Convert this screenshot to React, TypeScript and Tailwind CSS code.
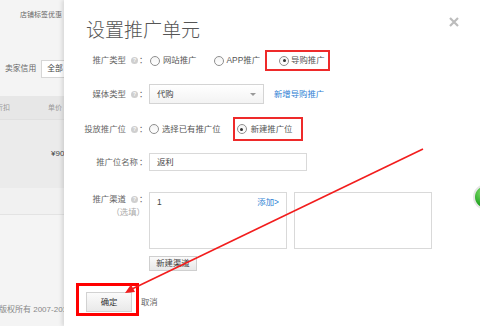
import React from "react";

function Radio({ checked = false }: { checked?: boolean }) {
  return (
    <span className="flex h-[10px] w-[10px] shrink-0 items-center justify-center rounded-full border border-[#8f8f8f] bg-gradient-to-b from-[#f4f4f4] to-white">
      {checked && <span className="h-[3px] w-[3px] rounded-full bg-[#333]" />}
    </span>
  );
}

function Help() {
  return (
    <span className="ml-[5px] flex h-[7px] w-[7px] items-center justify-center rounded-full bg-[#cfcfcf] text-[5px] font-bold leading-none text-white">
      ?
    </span>
  );
}

function Label({ text, help = true }: { text: string; help?: boolean }) {
  return (
    <div className="flex w-[83px] shrink-0 items-center justify-end text-[#666]">
      <span>{text}</span>
      {help && <Help />}
      <span className="ml-[1px] w-[8px]">：</span>
    </div>
  );
}

export default function App() {
  return (
    <div className="relative flex h-[326px] w-[480px] overflow-hidden bg-white font-['Liberation_Sans','Noto_Sans_CJK_SC',sans-serif] text-[8.4px] leading-none">
      {/* page behind the dialog */}
      <div className="flex w-[64px] shrink-0 flex-col overflow-hidden bg-[#f4f4f4] text-[#666]">
        <div className="flex h-[28px] items-center whitespace-nowrap pl-[20px] text-[7px]">
          店铺标签优惠
        </div>
        <div className="mt-[32px] flex h-[18px] items-center whitespace-nowrap pl-[5px] text-[7.8px]">
          <span>卖家信用</span>
          <span className="ml-[5px] flex h-[18px] w-[30px] shrink-0 items-center border border-[#d6d6d6] bg-white pl-[5px] text-[#444]">
            全部
          </span>
        </div>
        <div className="mt-[18px] flex h-[23px] items-center whitespace-nowrap bg-[#e7e7e7] text-[7px] text-[#999]">
          <span className="ml-[-4px]">折扣</span>
          <span className="ml-[38px]">单价</span>
        </div>
        <div className="flex h-[69px] items-center whitespace-nowrap border-t border-[#e0e0e0] bg-[#ebebeb] pl-[51px] text-[8px] text-[#444]">
          ¥90
        </div>
        <div className="h-[27px] border-b border-[#e3e3e3] bg-[#f1f1f1]" />
        <div className="flex flex-1 items-end whitespace-nowrap pb-[12px] text-[8px] text-[#888]">
          <span className="ml-[-1px]">版权所有 2007-2015</span>
        </div>
      </div>

      {/* dialog */}
      <div className="relative flex flex-1 flex-col bg-white text-[#555] shadow-[-2px_0_4px_rgba(0,0,0,0.12)]">
        <svg
          className="absolute right-[21px] top-[17px]"
          width="10"
          height="10"
          viewBox="0 0 10 10"
        >
          <path d="M1 1L9 9M9 1L1 9" stroke="#bcbcbc" strokeWidth="2.2" />
        </svg>

        <div className="mt-[16px] flex h-[24px] items-center pl-[22px] font-['Noto_Sans_CJK_SC',serif] text-[19px] font-light text-[#555]">
          设置推广单元
        </div>

        <div className="mt-[10px] flex h-[21px] items-center">
          <Label text="推广类型" />
          <div className="ml-[2px] flex items-center">
            <span className="ml-[1px]">
              <Radio />
            </span>
            <span className="ml-[3px]">网站推广</span>
            <span className="ml-[17px]">
              <Radio />
            </span>
            <span className="ml-[3px]">APP推广</span>
            <div className="ml-[5px] flex h-[21px] items-center border-2 border-[#ee2a2a] pl-[12px] pr-[3px]">
              <Radio checked />
              <span className="ml-[2px]">导购推广</span>
            </div>
          </div>
        </div>

        <div className="mt-[13px] flex h-[20px] items-center">
          <Label text="媒体类型" />
          <div className="ml-[2px] flex items-center">
            <div className="flex h-[20px] w-[115px] items-center justify-between border border-[#d4d4d4] bg-gradient-to-b from-white to-[#f3f3f3] pl-[7px] pr-[7px] text-[#444]">
              <span>代购</span>
              <span className="h-0 w-0 border-x-[3px] border-t-[3px] border-x-transparent border-t-[#999]" />
            </div>
            <span className="ml-[10px] text-[#2f7fd4]">新增导购推广</span>
          </div>
        </div>

        <div className="mt-[13px] flex h-[24px] items-center">
          <Label text="投放推广位" />
          <div className="ml-[2px] flex items-center">
            <Radio />
            <span className="ml-[3px]">选择已有推广位</span>
            <div className="ml-[12px] flex h-[24px] items-center border-2 border-[#ee2a2a] pl-[2px] pr-[8px]">
              <Radio checked />
              <span className="ml-[4px]">新建推广位</span>
            </div>
          </div>
        </div>

        <div className="mt-[12px] flex h-[18px] items-center">
          <Label text="推广位名称" help={false} />
          <div className="ml-[2px] flex h-[18px] w-[158px] items-center border border-[#d9d9d9] pl-[7px] text-[#444]">
            返利
          </div>
        </div>

        <div className="mt-[21px] flex">
          <div className="flex w-[83px] shrink-0 flex-col items-end">
            <div className="flex h-[14px] items-center">
              <span className="text-[#666]">推广渠道</span>
              <Help />
              <span className="ml-[1px] w-[8px] text-[#666]">：</span>
            </div>
            <div className="flex h-[12px] items-center pr-[2px] text-[#aaa]">（选填）</div>
          </div>
          <div className="ml-[2px] flex gap-[7px]">
            <div className="flex h-[57px] w-[138px] items-start justify-between border border-[#d9d9d9] px-[7px] pt-[5px]">
              <span className="text-[#444]">1</span>
              <span className="text-[#2f7fd4]">添加&gt;</span>
            </div>
            <div className="h-[57px] w-[138px] border border-[#d9d9d9]" />
          </div>
        </div>

        <div className="ml-[85px] mt-[7px] flex h-[15px] w-[48px] items-center justify-center border border-[#cfcfcf] bg-gradient-to-b from-[#fafafa] to-[#e8e8e8] text-[#444]">
          新建渠道
        </div>

        <div className="ml-[12px] mt-[12px] flex items-end">
          <div className="border-[3px] border-[#f00] pb-[1px] pl-[7px] pr-[4px] pt-[6px]">
            <div className="flex h-[20px] w-[46px] items-center justify-center border border-[#d2d2d2] bg-gradient-to-b from-[#fbfbfb] to-[#e9e9e9] text-[#333]">
              确定
            </div>
          </div>
          <span className="mb-[10px] ml-[2px] text-[#666]">取消</span>
        </div>
      </div>

      {/* green badge at the right edge */}
      <div className="absolute left-[473px] top-[184px] h-[26px] w-[26px] rounded-full border-2 border-[#e6e6e6] bg-[radial-gradient(circle_at_35%_30%,#7fdc6a,#21a321_60%,#137a13)]" />

      {/* red annotation arrow */}
      <svg className="pointer-events-none absolute left-0 top-0" width="480" height="326" viewBox="0 0 480 326">
        <line x1="423" y1="149" x2="132" y2="289" stroke="#f21d1d" strokeWidth="1.6" />
        <polygon points="125,293 131,284.5 135,292" fill="#f21d1d" />
      </svg>
    </div>
  );
}
